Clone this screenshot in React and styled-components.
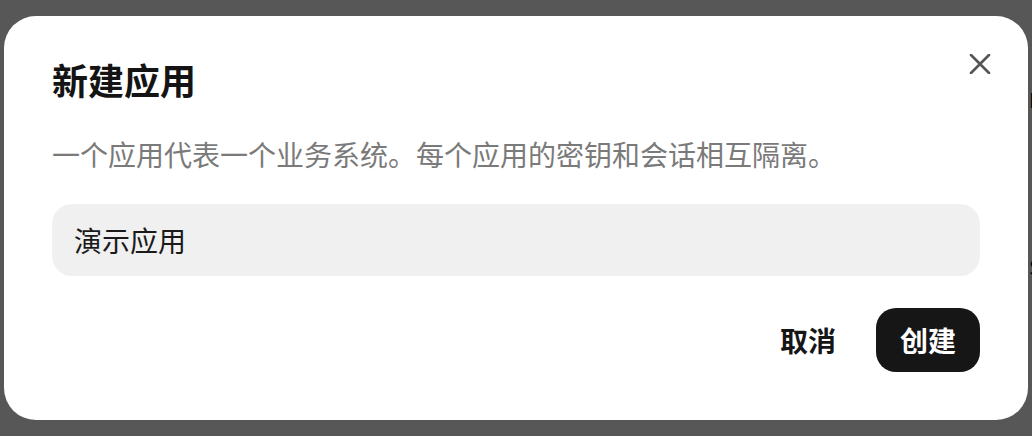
import React from "react";
import styled, { createGlobalStyle } from "styled-components";

const Global = createGlobalStyle`
  html, body { margin: 0; padding: 0; }
  body {
    width: 1032px;
    height: 436px;
    overflow: hidden;
    background: #ffffff;
    font-family: "Noto Sans CJK SC", "Noto Sans", sans-serif;
  }
`;

const Page = styled.div`
  position: relative;
  width: 1032px;
  height: 436px;
  display: flex;
  justify-content: flex-end;
  background: #ffffff;
`;

const SideList = styled.div`
  width: 3px;
  overflow: hidden;
  display: flex;
  flex-direction: column;
  gap: 138px;
  padding-top: 85px;
  font-size: 20px;
  color: #111;
  white-space: nowrap;
`;

const Overlay = styled.div`
  position: absolute;
  inset: 0;
  background: rgba(0, 0, 0, 0.66);
  display: flex;
  align-items: flex-start;
  justify-content: center;
  padding-top: 16px;
`;

const Dialog = styled.div`
  position: relative;
  width: 1024px;
  box-sizing: border-box;
  padding: 38px 48px 48px;
  background: #ffffff;
  border-radius: 32px;
  display: flex;
  flex-direction: column;
`;

const Title = styled.h2`
  margin: 0 0 29px;
  font-size: 36px;
  line-height: 50px;
  font-weight: 700;
  color: #141414;
`;

const Description = styled.p`
  margin: 0 0 29px;
  font-size: 28px;
  line-height: 42px;
  color: #7a7a7a;
`;

const Input = styled.input`
  height: 72px;
  box-sizing: border-box;
  border: none;
  outline: none;
  border-radius: 20px;
  background: #f0f0f0;
  padding: 0 22px;
  font-family: inherit;
  font-size: 28px;
  color: #1a1a1a;
`;

const Actions = styled.div`
  margin-top: 32px;
  display: flex;
  justify-content: flex-end;
  gap: 16px;
`;

const Button = styled.button`
  width: 104px;
  height: 64px;
  border: none;
  border-radius: 20px;
  font-family: inherit;
  font-size: 28px;
  font-weight: 700;
  cursor: pointer;
  background: ${(p) => (p.$primary ? "#161616" : "transparent")};
  color: ${(p) => (p.$primary ? "#ffffff" : "#161616")};
  padding: 0;
`;

const Close = styled.button`
  position: absolute;
  top: 28px;
  right: 28px;
  width: 40px;
  height: 40px;
  border: none;
  background: transparent;
  padding: 0;
  display: flex;
  align-items: center;
  justify-content: center;
  cursor: pointer;
`;

export default function App() {
  return (
    <>
      <Global />
      <Page>
        <SideList>
          <span>L</span>
          <span>$</span>
        </SideList>
        <Overlay>
          <Dialog>
            <Close aria-label="关闭">
              <svg width="22" height="20" viewBox="0 0 22 20">
                <path
                  d="M2 1 L20 19 M20 1 L2 19"
                  stroke="#555"
                  strokeWidth="2.6"
                  strokeLinecap="round"
                  fill="none"
                />
              </svg>
            </Close>
            <Title>新建应用</Title>
            <Description>
              一个应用代表一个业务系统。每个应用的密钥和会话相互隔离。
            </Description>
            <Input defaultValue="演示应用" />
            <Actions>
              <Button>取消</Button>
              <Button $primary>创建</Button>
            </Actions>
          </Dialog>
        </Overlay>
      </Page>
    </>
  );
}
